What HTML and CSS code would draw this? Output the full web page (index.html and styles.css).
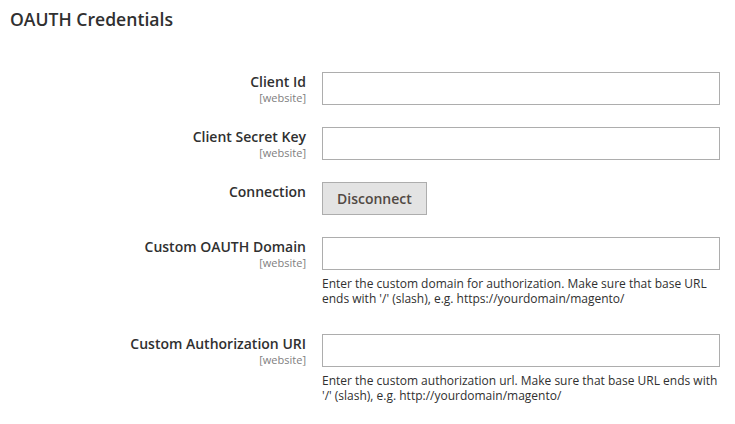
FILE: index.html
```html
<!DOCTYPE html>
<html lang="en">
<head>
<meta charset="utf-8">
<title>OAUTH Credentials</title>
<link rel="stylesheet" href="styles.css">
</head>
<body>
<div class="section">
  <h2 class="title">OAUTH Credentials</h2>
  <div class="fields">
    <div class="row">
      <label class="label" for="client-id"><span class="name">Client Id</span><span class="scope">[website]</span></label>
      <div class="value"><input class="input" id="client-id" type="text"></div>
    </div>
    <div class="row">
      <label class="label" for="client-secret"><span class="name">Client Secret Key</span><span class="scope">[website]</span></label>
      <div class="value"><input class="input" id="client-secret" type="text"></div>
    </div>
    <div class="row">
      <label class="label"><span class="name">Connection</span></label>
      <div class="value"><button class="button" type="button">Disconnect</button></div>
    </div>
    <div class="row">
      <label class="label" for="custom-domain"><span class="name">Custom OAUTH Domain</span><span class="scope">[website]</span></label>
      <div class="value">
        <input class="input" id="custom-domain" type="text">
        <p class="note">Enter the custom domain for authorization. Make sure that base URL ends with '/' (slash), e.g. https://yourdomain/magento/</p>
      </div>
    </div>
    <div class="row">
      <label class="label" for="custom-uri"><span class="name">Custom Authorization URI</span><span class="scope">[website]</span></label>
      <div class="value">
        <input class="input" id="custom-uri" type="text">
        <p class="note">Enter the custom authorization url. Make sure that base URL ends with '/' (slash), e.g. http://yourdomain/magento/</p>
      </div>
    </div>
  </div>
</div>
</body>
</html>
```

FILE: styles.css
```css
html, body {
  margin: 0;
  padding: 0;
  background: #ffffff;
}

body {
  font-family: "Open Sans", "Liberation Sans", sans-serif;
  color: #303030;
}

.section {
  padding: 8px 0 0 10px;
}

.title {
  margin: 0 0 41px 0;
  font-size: 17.6px;
  line-height: 23px;
  font-weight: 600;
  color: #303030;
}

.fields {
  display: flex;
  flex-direction: column;
  gap: 22px;
}

.row {
  display: grid;
  grid-template-columns: 296px 398px;
  column-gap: 16px;
  align-items: start;
}

.label {
  display: flex;
  flex-direction: column;
  align-items: flex-end;
  text-align: right;
}

.name {
  font-size: 14px;
  line-height: 19px;
  font-weight: 600;
  color: #303030;
}

.scope {
  font-size: 11px;
  line-height: 14px;
  color: #808080;
}

.value {
  display: flex;
  flex-direction: column;
  align-items: flex-start;
}

.input {
  box-sizing: border-box;
  width: 398px;
  height: 33px;
  margin: 0;
  padding: 0 10px;
  border: 1px solid #adadad;
  border-radius: 0;
  background: #ffffff;
  font-family: inherit;
  font-size: 14px;
  color: #303030;
  outline: none;
}

.button {
  box-sizing: border-box;
  height: 33px;
  margin: 0;
  padding: 0 14px;
  border: 1px solid #adadad;
  border-radius: 0;
  background: #e3e3e3;
  font-family: inherit;
  font-size: 14px;
  line-height: 19px;
  font-weight: 600;
  color: #514943;
}

.note {
  margin: 6px 0 6px 0;
  font-size: 12px;
  line-height: 15px;
  color: #303030;
}
```
